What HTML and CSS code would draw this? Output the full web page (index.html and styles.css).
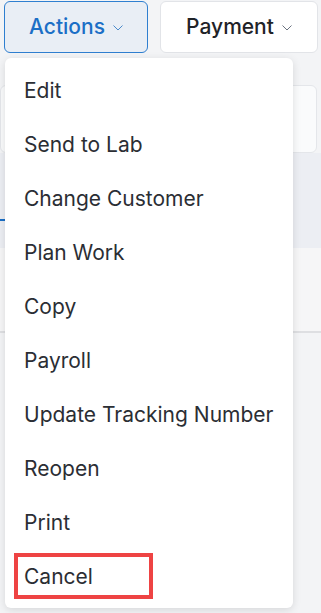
FILE: index.html
```html
<!DOCTYPE html>
<html lang="en">
<head>
<meta charset="utf-8">
<title>Actions menu</title>
<link rel="stylesheet" href="styles.css">
</head>
<body>
<div class="toolbar">
  <button class="btn btn-actions">Actions
    <svg class="chev" width="10" height="6" viewBox="0 0 10 6"><path d="M0.5 0.5 L5 5 L9.5 0.5" fill="none" stroke="currentColor" stroke-width="1"/></svg>
  </button>
  <button class="btn btn-payment">Payment
    <svg class="chev" width="10" height="6" viewBox="0 0 10 6"><path d="M0.5 0.5 L5 5 L9.5 0.5" fill="none" stroke="currentColor" stroke-width="1"/></svg>
  </button>
</div>
<div class="page">
  <div class="card"></div>
  <div class="band">
    <div class="tab"></div>
  </div>
  <div class="lower"></div>
</div>
<ul class="menu">
  <li class="item">Edit</li>
  <li class="item">Send to Lab</li>
  <li class="item">Change Customer</li>
  <li class="item">Plan Work</li>
  <li class="item">Copy</li>
  <li class="item">Payroll</li>
  <li class="item">Update Tracking Number</li>
  <li class="item">Reopen</li>
  <li class="item">Print</li>
  <li class="item item-cancel"><span class="highlight">Cancel</span></li>
</ul>
</body>
</html>
```
FILE: styles.css
```css
* { box-sizing: border-box; }
html, body { margin: 0; padding: 0; }
body {
  width: 321px;
  height: 613px;
  overflow: hidden;
  background: #f3f4f6;
  font-family: Inter, "Noto Sans", "Liberation Sans", sans-serif;
  position: relative;
}
.toolbar {
  display: flex;
  gap: 12px;
  padding: 1px 0 0 4px;
}
.btn {
  height: 52px;
  border-radius: 6px;
  font-family: inherit;
  font-size: 21px;
  font-weight: 500;
  display: flex;
  align-items: center;
  justify-content: center;
  gap: 8px;
  padding: 0 0 2px 0;
}
.btn-actions {
  width: 144px;
  background: #e9eef5;
  border: 1px solid #2f7fd0;
  color: #1b6fc6;
}
.btn-payment {
  width: 158px;
  background: #ffffff;
  border: 1px solid #e2e4e8;
  color: #1f2328;
}
.chev { margin-top: 4px; color: #6b7380; }
.btn-actions .chev { color: #4a8acb; }
.page {
  display: flex;
  flex-direction: column;
  margin-top: 32px;
}
.card {
  height: 68px;
  margin-right: 4px;
  background: #fafbfc;
  border: 1px solid #e4e6ea;
  border-radius: 6px;
}
.band {
  height: 95px;
  background: #eceef3;
  position: relative;
}
.tab {
  position: absolute;
  left: 0;
  top: 66px;
  width: 6px;
  height: 2px;
  background: #1b6fc6;
}
.lower {
  height: 85px;
  background: #f6f6f7;
  border-bottom: 2px solid #dedfe2;
}
.menu {
  position: absolute;
  left: 5px;
  top: 58px;
  width: 288px;
  margin: 0;
  padding: 5px 0;
  list-style: none;
  background: #ffffff;
  border-radius: 6px;
  box-shadow: 0 2px 8px rgba(0, 0, 0, 0.12);
}
.item {
  height: 54px;
  display: flex;
  align-items: center;
  padding-left: 19px;
  font-size: 21px;
  color: #2b2e34;
}
.item-cancel { padding-left: 9px; }
.highlight {
  display: flex;
  align-items: center;
  width: 139px;
  height: 46px;
  padding-left: 6px;
  border: 4px solid #ee4343;
}
```
